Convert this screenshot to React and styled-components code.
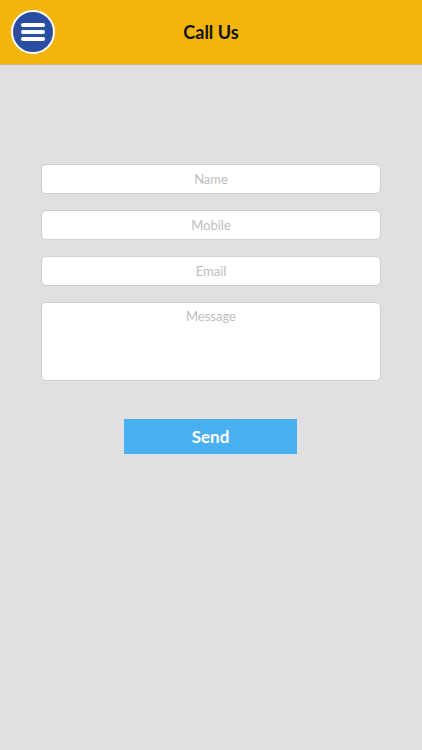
import React from "react";
import styled, { createGlobalStyle } from "styled-components";

const GlobalStyle = createGlobalStyle`
  html, body {
    margin: 0;
    padding: 0;
    background: #e1dfe0;
    font-family: Lato, "Open Sans", "Liberation Sans", sans-serif;
  }
  * { box-sizing: border-box; }
`;

const Page = styled.div`
  width: 422px;
  min-height: 750px;
  background: #e1dfe0;
`;

const Header = styled.header`
  height: 65px;
  background: #f2b50b;
  border-bottom: 1px solid #c9b58a;
  display: flex;
  align-items: center;
  position: relative;
  padding-left: 11px;
`;

const MenuButton = styled.button`
  width: 44px;
  height: 44px;
  border-radius: 50%;
  background: #2a4ea2;
  border: 2px solid #fff;
  display: flex;
  flex-direction: column;
  justify-content: center;
  align-items: center;
  gap: 3px;
  padding: 0;
  cursor: pointer;
  span {
    width: 24px;
    height: 4px;
    border-radius: 2px;
    background: #fff;
  }
`;

const Title = styled.h1`
  position: absolute;
  left: 0;
  right: 0;
  text-align: center;
  margin: 0;
  font-size: 18px;
  font-weight: 700;
  color: #111;
  pointer-events: none;
`;

const Form = styled.form`
  display: flex;
  flex-direction: column;
  align-items: center;
  padding-top: 99px;
`;

const Fields = styled.div`
  width: 340px;
  display: flex;
  flex-direction: column;
  gap: 16px;
`;

const Field = styled.input`
  display: block;
  width: 100%;
  height: 30px;
  border: 1px solid #cfcdce;
  border-radius: 5px;
  background: #fff;
  text-align: center;
  font-family: inherit;
  font-size: 13px;
  color: #333;
  outline: none;
  &::placeholder { color: #bdbdbd; }
`;

const Area = styled.textarea`
  display: block;
  width: 100%;
  height: 79px;
  border: 1px solid #cfcdce;
  border-radius: 5px;
  background: #fff;
  text-align: center;
  font-family: inherit;
  font-size: 13px;
  padding-top: 5px;
  resize: none;
  outline: none;
  &::placeholder { color: #bdbdbd; }
`;

const SendButton = styled.button`
  margin-top: 38px;
  margin-right: 1px;
  width: 173px;
  height: 35px;
  border: none;
  background: #48aff0;
  color: #fff;
  font-family: inherit;
  font-size: 17px;
  font-weight: 700;
  cursor: pointer;
`;

export default function App() {
  return (
    <Page>
      <GlobalStyle />
      <Header>
        <MenuButton type="button" aria-label="Menu">
          <span />
          <span />
          <span />
        </MenuButton>
        <Title>Call Us</Title>
      </Header>
      <Form onSubmit={(e) => e.preventDefault()}>
        <Fields>
          <Field placeholder="Name" />
          <Field placeholder="Mobile" />
          <Field placeholder="Email" />
          <Area placeholder="Message" />
        </Fields>
        <SendButton type="submit">Send</SendButton>
      </Form>
    </Page>
  );
}
